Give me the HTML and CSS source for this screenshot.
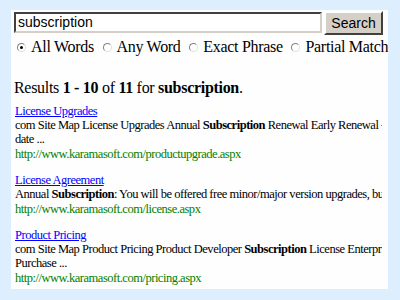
FILE: index.html
```html
<!DOCTYPE html>
<html>
<head>
    <title>Search</title>
    <link rel="stylesheet" href="styles.css">
</head>
<body>
    <div class="page">
        <div class="search-bar">
            <div class="search-input">subscription</div>
            <div class="search-button">Search</div>
        </div>
        <div class="options">
            <span class="option"><span class="radio checked"></span>All Words</span>
            <span class="option"><span class="radio"></span>Any Word</span>
            <span class="option"><span class="radio"></span>Exact Phrase</span>
            <span class="option"><span class="radio"></span>Partial Match</span>
        </div>

        <div class="summary">Results <b>1 - 10</b> of <b>11</b> for <b>subscription</b>.</div>

        <div class="results">
            <div class="result">
                <a class="result-title" href="#">License Upgrades</a>
                <div class="result-line">com Site Map License Upgrades Annual <b>Subscription</b> Renewal Early Renewal -</div>
                <div class="result-line">date ...</div>
                <div class="result-url">http://www.karamasoft.com/productupgrade.aspx</div>
            </div>
            <div class="result">
                <a class="result-title" href="#">License Agreement</a>
                <div class="result-line">Annual <b>Subscription</b>: You will be offered free minor/major version upgrades, but</div>
                <div class="result-url">http://www.karamasoft.com/license.aspx</div>
            </div>
            <div class="result">
                <a class="result-title" href="#">Product Pricing</a>
                <div class="result-line">com Site Map Product Pricing Product Developer <b>Subscription</b> License Enterprise</div>
                <div class="result-line">Purchase ...</div>
                <div class="result-url">http://www.karamasoft.com/pricing.aspx</div>
            </div>
        </div>
    </div>
</body>
</html>
```

FILE: styles.css
```css
body {
    margin: 0;
    background-color: #ddeeff;
    font-family: "Liberation Serif", serif;
    color: #000;
}

.page {
    margin: 10px 12px 11px 11px;
    background-color: #fefefe;
    height: 279px;
    overflow: hidden;
    padding: 1px 0 0 3px;
    box-sizing: border-box;
}

.search-bar {
    display: flex;
    align-items: flex-start;
}

.search-input {
    width: 302px;
    height: 17px;
    margin-top: 1px;
    border: 2px solid;
    border-color: #404040 #d4d0c8 #d4d0c8 #404040;
    font-family: "Liberation Sans", sans-serif;
    font-size: 14px;
    line-height: 17px;
    padding-left: 2px;
    background: #fff;
}

.search-button {
    margin-left: 2px;
    width: 55px;
    height: 20px;
    border: 2px solid;
    border-color: #fff #404040 #404040 #fff;
    background-color: #d4d0c8;
    font-family: "Liberation Sans", sans-serif;
    font-size: 14px;
    line-height: 20px;
    text-align: center;
}

.options {
    margin-top: 3px;
    font-size: 16px;
    letter-spacing: -0.3px;
    line-height: 18px;
    white-space: nowrap;
}

.option {
    margin-right: 2px;
}

.radio {
    display: inline-block;
    width: 7px;
    height: 7px;
    border: 1px solid;
    border-color: #808080 #e0e0e0 #e0e0e0 #808080;
    border-radius: 50%;
    margin: 0 5px 0 3px;
    background: #fff;
    position: relative;
}

.radio.checked::after {
    content: "";
    position: absolute;
    left: 2px;
    top: 2px;
    width: 3px;
    height: 3px;
    border-radius: 50%;
    background: #000;
}

.summary {
    margin-top: 23px;
    font-size: 16px;
    letter-spacing: -0.3px;
    line-height: 18px;
}

.results {
    width: 368px;
    overflow: hidden;
}

.result {
    margin-top: 7px;
    font-size: 12.5px;
    letter-spacing: -0.48px;
    line-height: 14px;
    padding-left: 1px;
    white-space: nowrap;
}

.result + .result {
    margin-top: 12px;
}

.result-title {
    color: #0000ff;
}

.result-url {
    color: #008000;
    margin-top: 1px;
}
```
